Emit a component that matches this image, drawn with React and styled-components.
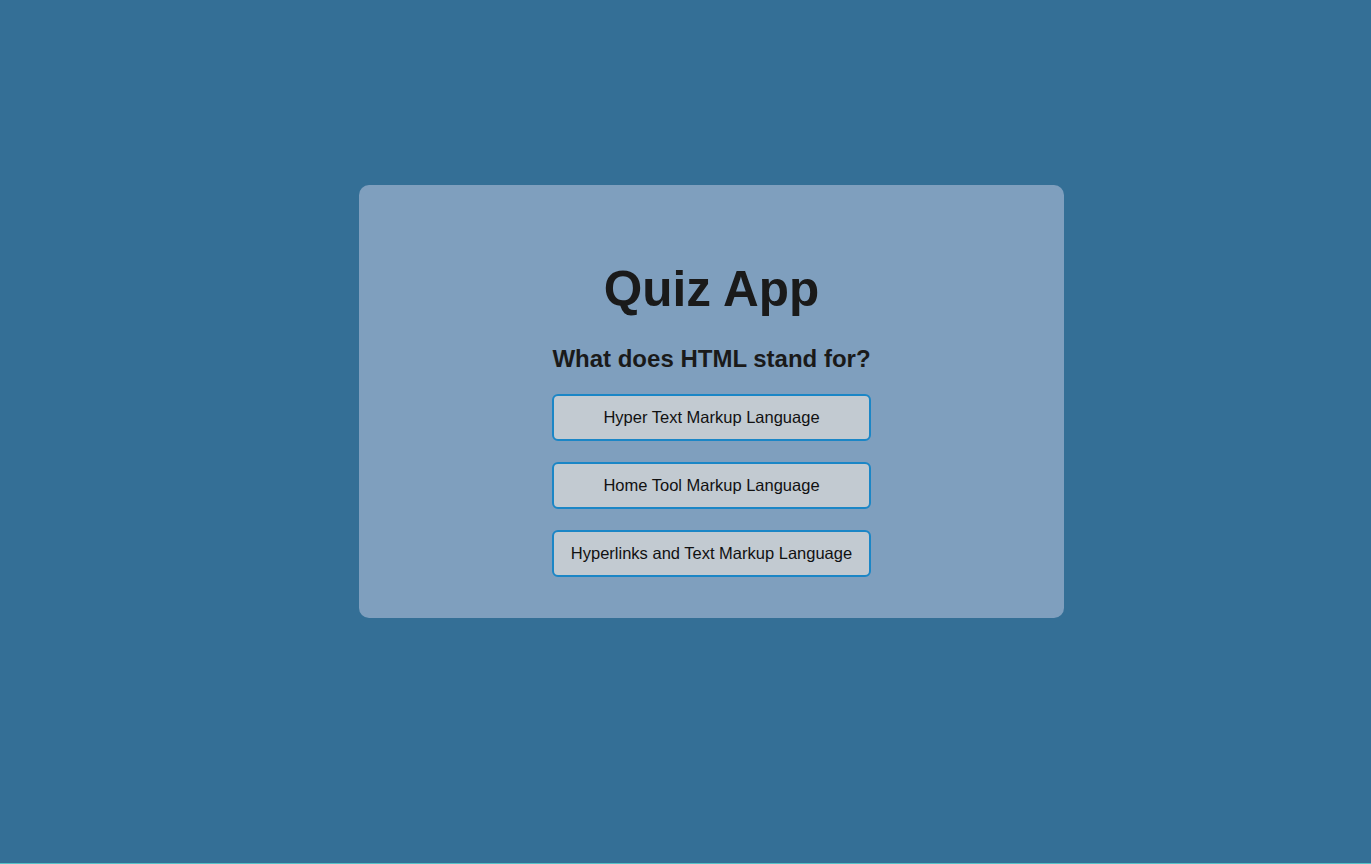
import React from 'react';
import styled, { createGlobalStyle } from 'styled-components';

const GlobalStyle = createGlobalStyle`
  html, body {
    margin: 0;
    padding: 0;
  }

  body {
    background: #346f96;
    font-family: "Liberation Sans", Arial, sans-serif;
  }
`;

const Page = styled.main`
  box-sizing: border-box;
  min-height: 864px;
  padding: 185px 0 0 359px;
  border-bottom: 1px solid #55c2c8;
`;

const Card = styled.section`
  box-sizing: border-box;
  width: 705px;
  height: 433px;
  padding: 40px 0;
  background: #7f9fbe;
  border-radius: 10px;
  display: flex;
  flex-direction: column;
  align-items: center;
`;

const Title = styled.h1`
  margin: 36px 0 0;
  font-size: 49.5px;
  line-height: 56px;
  font-weight: 700;
  color: #1a1a1a;
`;

const Question = styled.h2`
  margin: 28px 0 0;
  font-size: 24px;
  line-height: 28px;
  font-weight: 700;
  color: #1a1a1a;
`;

const Answers = styled.div`
  margin-top: 21px;
  width: 319px;
  display: flex;
  flex-direction: column;
  gap: 21px;
`;

const AnswerButton = styled.button`
  box-sizing: border-box;
  height: 47px;
  width: 100%;
  padding: 0 10px;
  background: #c2cad1;
  border: 2px solid #1b86c6;
  border-radius: 6px;
  font-family: "Liberation Sans", Arial, sans-serif;
  font-size: 16.5px;
  color: #111;
  cursor: pointer;

  &:hover {
    background: #d0d7dd;
  }
`;

const answers = [
  'Hyper Text Markup Language',
  'Home Tool Markup Language',
  'Hyperlinks and Text Markup Language',
];

const App = () => {
  return (
    <>
      <GlobalStyle />
      <Page>
        <Card>
          <Title>Quiz App</Title>
          <Question>What does HTML stand for?</Question>
          <Answers>
            {answers.map(answer => (
              <AnswerButton key={answer}>{answer}</AnswerButton>
            ))}
          </Answers>
        </Card>
      </Page>
    </>
  );
};

export default App;
